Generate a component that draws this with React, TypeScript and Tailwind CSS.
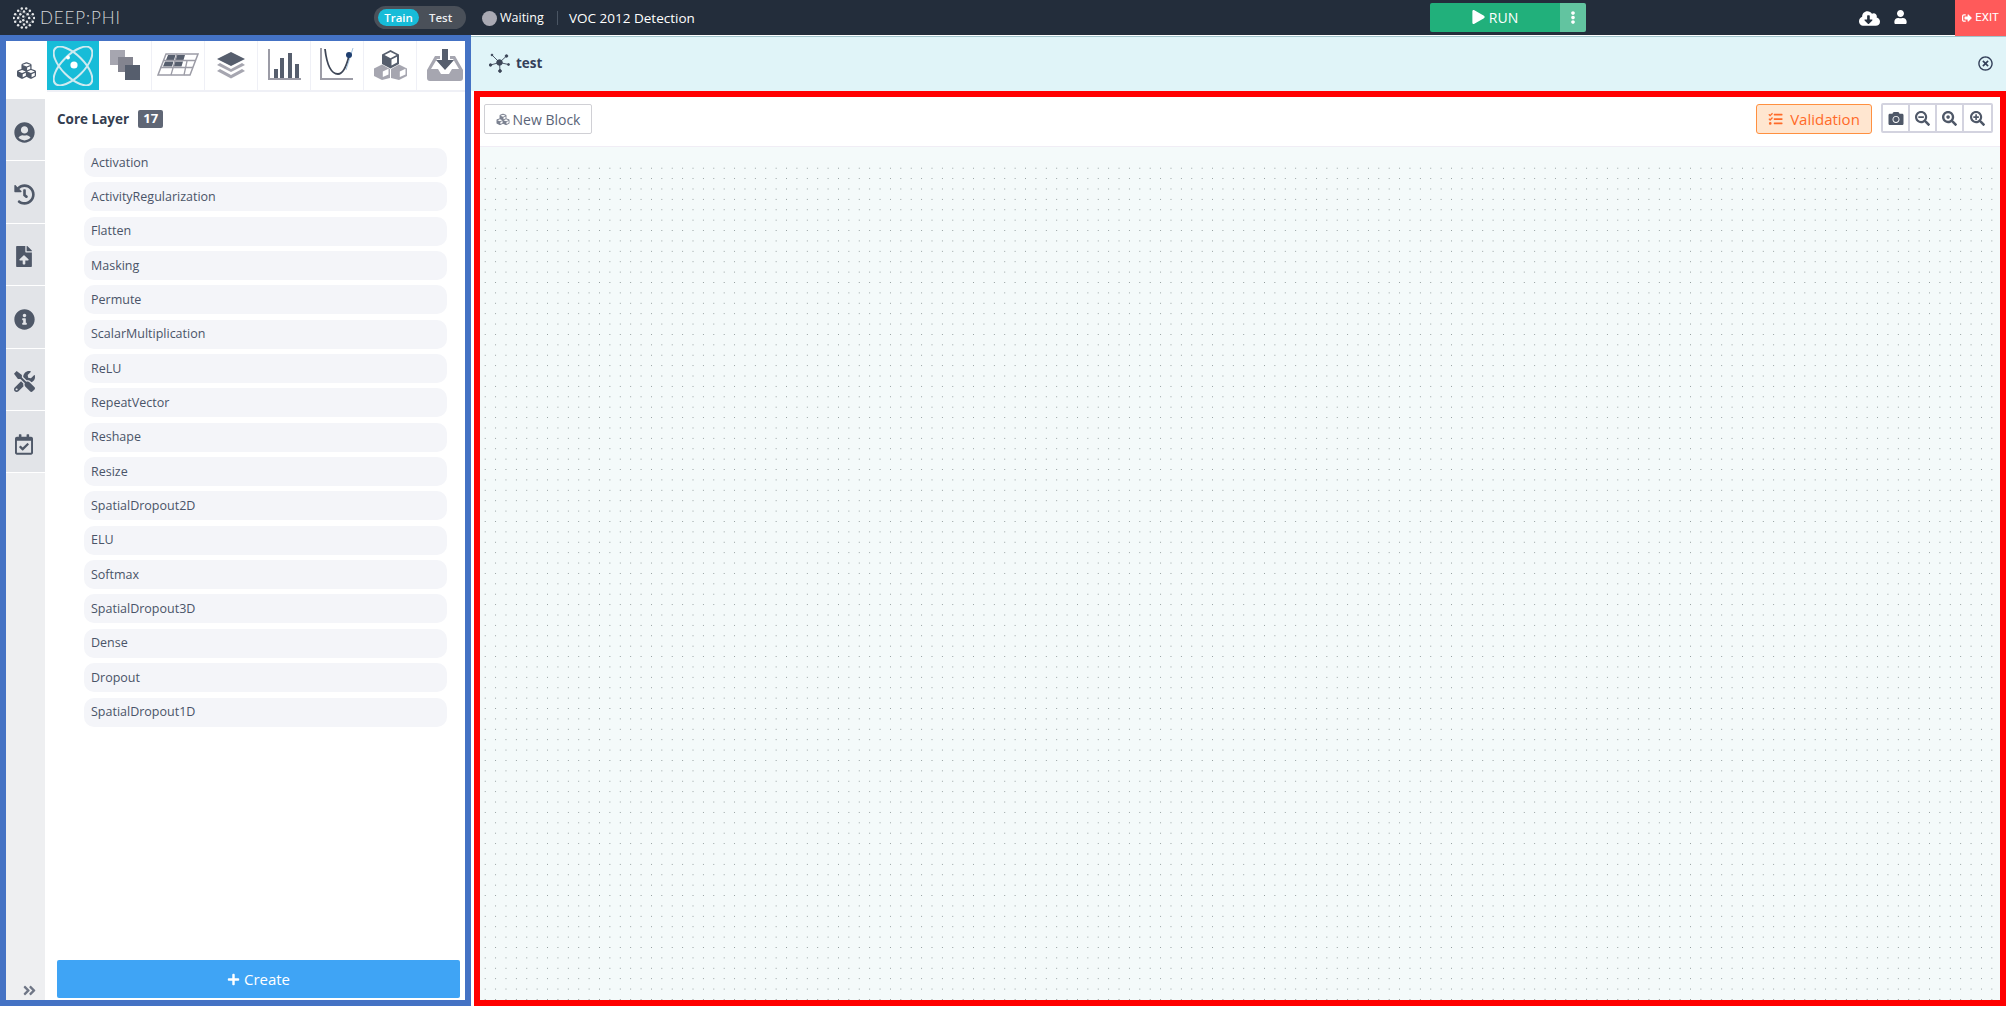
import type { ReactNode } from 'react'
import {
  FaAngleDoubleRight,
  FaCamera,
  FaCloudDownloadAlt,
  FaCubes,
  FaEllipsisV,
  FaFileUpload,
  FaHistory,
  FaInfoCircle,
  FaPlay,
  FaPlus,
  FaRegCalendarCheck,
  FaRegTimesCircle,
  FaSearchMinus,
  FaSearchPlus,
  FaSignOutAlt,
  FaTasks,
  FaTools,
  FaUser,
  FaUserCircle,
} from 'react-icons/fa'

const layers = [
  'Activation',
  'ActivityRegularization',
  'Flatten',
  'Masking',
  'Permute',
  'ScalarMultiplication',
  'ReLU',
  'RepeatVector',
  'Reshape',
  'Resize',
  'SpatialDropout2D',
  'ELU',
  'Softmax',
  'SpatialDropout3D',
  'Dense',
  'Dropout',
  'SpatialDropout1D',
]

const logoDots = [
  [12, 2], [18, 2], [7, 5], [15, 6], [23, 5], [3, 10], [10, 10], [20, 10], [27, 10],
  [1, 15], [7, 15], [14, 13], [14, 18], [22, 15], [29, 15], [3, 20], [10, 20], [19, 20],
  [27, 20], [7, 25], [15, 24], [23, 25], [12, 28], [18, 28],
]

function Logo() {
  return (
    <div className="flex items-center gap-[5px] ml-[13px] w-[120px]">
      <svg width="22" height="22" viewBox="0 0 30 30" className="shrink-0">
        <g stroke="#c9ccd0" strokeWidth="0.6" opacity="0.6">
          <path d="M12 2L7 15L15 24L27 20L20 10L7 5M3 10L14 18L23 5M3 20L15 6L29 15L18 28" fill="none" />
        </g>
        {logoDots.map(([x, y], i) => (
          <circle key={i} cx={x} cy={y} r="1.7" fill="#e4e6e8" />
        ))}
      </svg>
      <span className="font-['Lato',sans-serif] font-light text-[17px] leading-none tracking-[0.9px] text-[#d4d6d9] whitespace-nowrap">
        DEEP:PHI
      </span>
    </div>
  )
}

function TopBar() {
  return (
    <div className="h-[35px] bg-[#232d3b] flex items-center shrink-0 text-white">
      <Logo />
      <div className="ml-[241px] w-[92px] h-[23px] rounded-full bg-[#4a5059] flex items-center pl-[4px] text-[11.5px] font-semibold">
        <div className="w-[41px] h-[17px] rounded-full bg-[#17bcd8] flex items-center justify-center">Train</div>
        <div className="ml-[10px] text-[#eceef0]">Test</div>
      </div>
      <div className="ml-[16px] mt-[1px] w-[15px] h-[15px] rounded-full bg-[#a9a9b3]" />
      <span className="ml-[3px] mt-[1px] w-[44px] text-[12.5px] whitespace-nowrap">Waiting</span>
      <div className="ml-[13px] mt-[1px] w-px h-[14px] bg-[#4a5563]" />
      <span className="ml-[11px] mt-[1px] w-[126px] text-[13.5px] whitespace-nowrap">VOC 2012 Detection</span>
      <div className="ml-[735px] w-[156px] h-[29px] mt-[-1px] flex rounded-[2px] overflow-hidden">
        <div className="w-[130px] bg-[#21b07b] flex items-center justify-center gap-[4px] text-[14px]">
          <FaPlay className="w-[13px] h-[14px]" />
          <span>RUN</span>
        </div>
        <div className="flex-1 bg-[#62c4a0] flex items-center justify-center">
          <FaEllipsisV className="w-[12px] h-[13px]" />
        </div>
      </div>
      <FaCloudDownloadAlt className="ml-[273px] w-[21px] h-[17px] mt-[2px]" />
      <FaUser className="ml-[14px] w-[13px] h-[14px] mt-[-1px]" />
      <div className="ml-auto w-[51px] h-[36px] self-start bg-[#ff5a5a] flex items-center justify-center gap-[3px] text-[11.5px] font-['Roboto',sans-serif] relative z-10">
        <FaSignOutAlt className="w-[10px] h-[10px]" />
        <span>EXIT</span>
      </div>
    </div>
  )
}

function AtomIcon() {
  return (
    <svg width="40" height="40" viewBox="0 0 40 40" fill="none" stroke="#cfeaf0" strokeWidth="2">
      <ellipse cx="20" cy="20" rx="25" ry="11" transform="rotate(45 20 20)" />
      <ellipse cx="20" cy="20" rx="25" ry="11" transform="rotate(-45 20 20)" />
      <circle cx="21" cy="19" r="3.600" fill="#ffffff" stroke="none" />
      <circle cx="15" cy="11.500" r="1.900" fill="#ffffff" stroke="none" />
    </svg>
  )
}

function SquaresIcon() {
  return (
    <svg width="30" height="30" viewBox="0 0 30 30">
      <rect x="0" y="0" width="15" height="15" fill="#a6a6b0" />
      <rect x="8" y="7" width="15" height="15" fill="#83848f" />
      <rect x="15" y="15" width="15" height="15" fill="#565e6d" />
    </svg>
  )
}

function GridIcon() {
  return (
    <svg width="42" height="24" viewBox="0 0 42 24">
      <path d="M9 1H41L33 22H1Z" fill="none" stroke="#9c9ca6" strokeWidth="1.5" />
      <path d="M11 2H18.5L17 7H9ZM20 2H28L26.5 7H18.5ZM8 8.5H16.5L15 13.5H6ZM18 8.5H26L24.5 13.5H16.5Z" fill="#565e6d" />
      <path d="M30 8L27 22M39 7.500H6M36 14.500H3M20 1L14 22" stroke="#9c9ca6" strokeWidth="1.3" fill="none" />
    </svg>
  )
}

function StackIcon() {
  return (
    <svg width="28" height="28" viewBox="0 0 28 28">
      <path d="M14 1L28 8L14 15L0 8Z" fill="#565e6d" />
      <path d="M3 12L14 18L25 12L28 14L14 21L0 14Z" fill="#a6a6b0" />
      <path d="M3 18L14 24L25 18L28 20L14 27.500L0 20Z" fill="#a6a6b0" />
    </svg>
  )
}

function BarsIcon() {
  return (
    <svg width="33" height="32" viewBox="0 0 33 32">
      <path d="M1 0V30H33" fill="none" stroke="#9c9ca6" strokeWidth="2" />
      <rect x="6" y="20" width="4" height="9" fill="#565e6d" />
      <rect x="12" y="9" width="4" height="20" fill="#565e6d" />
      <rect x="20" y="4" width="4" height="25" fill="#565e6d" />
      <rect x="27" y="15" width="4" height="14" fill="#565e6d" />
    </svg>
  )
}

function CurveIcon() {
  return (
    <svg width="34" height="33" viewBox="0 0 34 33" fill="none">
      <path d="M1 0V31H33" stroke="#9c9ca6" strokeWidth="2" />
      <path d="M5 1C7 18 12 26 18 26C24 26 27 16 29 8" stroke="#3e4656" strokeWidth="1.8" />
      <path d="M33 0L26 22" stroke="#8fb6d8" strokeWidth="0.8" />
      <circle cx="29" cy="7" r="3" fill="#1f3f70" />
    </svg>
  )
}

function CubesIcon() {
  return (
    <svg width="33" height="30" viewBox="0 0 33 30">
      <path d="M16.500 0L25 4.500V14L16.500 18.500L8 14V4.500Z" fill="#565e6d" />
      <path d="M10.500 5L16.500 8.200L22.500 5L16.500 2Z M17.500 9.500V15.500L23 12.500V6.800Z" fill="#ffffff" />
      <path d="M8 14.500L16 19V28L8 30L0 26V18.500Z" fill="#a6a6b0" />
      <path d="M25 14.500L33 18.500V26L25 30L17 28V19Z" fill="#a6a6b0" />
      <path d="M8.800 21.500V27L14.500 24.500V18.800ZM25.800 21.500V27L31.500 24.500V18.800Z" fill="#ffffff" />
    </svg>
  )
}

function InboxIcon() {
  return (
    <svg width="36" height="32" viewBox="0 0 36 32">
      <path d="M8 7H13V10H10L4 20H11L14 25H22L25 20H32L26 10H23V7H28L36 21V29Q36 32 33 32H3Q0 32 0 29V21Z" fill="#a6a6b0" />
      <path d="M15 0H21V11H27L18 21L9 11H15Z" fill="#565e6d" />
    </svg>
  )
}

function NetworkIcon() {
  return (
    <svg width="21" height="20" viewBox="0 0 21 20" fill="#3c4658" stroke="#3c4658" strokeWidth="0.9">
      <circle cx="10.500" cy="9.500" r="2.800" />
      <circle cx="3" cy="2" r="0.900" />
      <circle cx="17.500" cy="3" r="1.300" />
      <circle cx="1.500" cy="12" r="1.300" />
      <circle cx="19.500" cy="11.500" r="1" />
      <circle cx="11" cy="18" r="1.400" />
      <path d="M10.500 9.500L3 2M10.500 9.500L17.500 3M10.500 9.500L1.500 12M10.500 9.500L19.500 11.500M10.500 9.500L11 18" fill="none" />
    </svg>
  )
}

function ZoomDotIcon() {
  return (
    <svg width="15" height="15" viewBox="0 0 512 512" fill="#4f5868">
      <path d="M505 442.700L405.300 343c-4.500-4.500-10.600-7-17-7H372c27.600-35.300 44-79.700 44-128C416 93.100 322.900 0 208 0S0 93.100 0 208s93.100 208 208 208c48.300 0 92.700-16.400 128-44v16.300c0 6.400 2.500 12.500 7 17l99.700 99.700c9.400 9.400 24.600 9.400 33.900 0l28.300-28.300c9.400-9.400 9.400-24.600.1-34zM208 336c-70.700 0-128-57.200-128-128 0-70.700 57.200-128 128-128 70.700 0 128 57.200 128 128 0 70.700-57.200 128-128 128z" />
      <circle cx="208" cy="208" r="62" />
    </svg>
  )
}

const topTabs = [
  <SquaresIcon key="squares" />,
  <GridIcon key="grid" />,
  <StackIcon key="stack" />,
  <BarsIcon key="bars" />,
  <CurveIcon key="curve" />,
  <CubesIcon key="cubes" />,
]

const railIcons = [
  <FaUserCircle key="user" className="w-[21px] h-[21px]" />,
  <FaHistory key="history" className="w-[21px] h-[21px]" />,
  <FaFileUpload key="file" className="w-[16px] h-[21px]" />,
  <FaInfoCircle key="info" className="w-[21px] h-[21px]" />,
  <FaTools key="tools" className="w-[21px] h-[21px]" />,
  <FaRegCalendarCheck key="calendar" className="w-[18px] h-[21px]" />,
]

function Rail() {
  return (
    <div className="w-[39px] shrink-0 bg-[#eeeff1] flex flex-col text-[#4f5868] relative">
      <div className="h-[58px] w-[41px] bg-white flex items-center justify-center relative z-10">
        <FaCubes className="w-[21px] h-[19px] text-[#4f5868]" />
      </div>
      {railIcons.map((icon, i) => (
        <div key={i} className="h-[62.4px] pt-[5px] pr-[3px] bg-[#e2e4e8] border-b border-white flex items-center justify-center">
          {icon}
        </div>
      ))}
      <FaAngleDoubleRight className="absolute left-[16px] bottom-[2px] w-[15px] h-[15px] text-[#6f7686]" />
    </div>
  )
}

function LayerPanel() {
  return (
    <div className="flex-1 min-w-0 flex flex-col">
      <div className="h-[51px] flex ml-[2px] border-b-2 border-[#eff0f6] shrink-0">
        <div className="w-[52px] h-[49px] bg-[#17bcd8] overflow-hidden flex items-center justify-center">
          <AtomIcon />
        </div>
        {topTabs.map((icon, i) => (
          <div key={i} className="w-[53px] h-[49px] border-r border-[#eff0f6] pb-[2px] flex items-center justify-center">
            {icon}
          </div>
        ))}
        <div className="flex-1 h-[49px] pb-[2px] pl-[10px] flex items-center">
          <InboxIcon />
        </div>
      </div>
      <div className="flex items-center pl-[12px] h-[18px] mt-[18px]">
        <span className="text-[13.5px] font-bold text-[#343e50]">Core Layer</span>
        <span className="ml-[9px] w-[25px] h-[18px] rounded-[2px] bg-[#5f6675] text-white text-[13px] font-bold flex items-center justify-center">
          17
        </span>
      </div>
      <div className="mt-[20px] pl-[39px] pr-[18px]">
        {layers.map((name) => (
          <div
            key={name}
            className="h-[29px] mb-[5.35px] pt-[1px] rounded-[10px] bg-[#f4f5f9] pl-[7px] flex items-center text-[12.5px] text-[#4a5468]"
          >
            {name}
          </div>
        ))}
      </div>
      <div className="mt-auto mb-[2px] ml-[12px] mr-[5px] h-[38px] bg-[#3fa4f5] rounded-[2px] flex items-center justify-center gap-[4px] text-white text-[15px]">
        <FaPlus className="w-[13px] h-[13px]" />
        <span>Create</span>
      </div>
    </div>
  )
}

function ToolButton({ children, last }: { children: ReactNode; last?: boolean }) {
  return (
    <div className={`w-[27px] h-full flex items-center justify-center text-[#4f5868] ${last ? 'flex-1' : 'border-r-2 border-[#d3d3df]'}`}>
      {children}
    </div>
  )
}

function Toolbar() {
  return (
    <div className="h-[50px] shrink-0 bg-white border-b border-[#f0edf5] flex items-center pl-[4px] pr-[7px] pb-[5px]">
      <div className="w-[108px] h-[30px] border border-[#d0d0d5] rounded-[2px] flex items-center justify-center gap-[3px] text-[14px] text-[#5a6478]">
        <FaCubes className="w-[14px] h-[13px] text-[#7b8190]" />
        <span>New Block</span>
      </div>
      <div className="ml-auto w-[116px] h-[30px] bg-[#ffe6d0] border border-[#ff9040] rounded-[3px] flex items-center justify-center gap-[7px] text-[15px] font-medium text-[#ff6a28]">
        <FaTasks className="w-[15px] h-[14px]" />
        <span>Validation</span>
      </div>
      <div className="ml-[9px] w-[112px] h-[30px] mt-[-2px] border-2 border-[#d3d3df] rounded-[2px] flex">
        <ToolButton>
          <FaCamera className="w-[16px] h-[15px]" />
        </ToolButton>
        <ToolButton>
          <FaSearchMinus className="w-[15px] h-[15px]" />
        </ToolButton>
        <ToolButton>
          <ZoomDotIcon />
        </ToolButton>
        <ToolButton last>
          <FaSearchPlus className="w-[15px] h-[15px]" />
        </ToolButton>
      </div>
    </div>
  )
}

export default function App() {
  return (
    <div className="h-[1009px] w-[2006px] bg-white flex flex-col overflow-hidden font-['Open_Sans',sans-serif]">
      <TopBar />
      <div className="flex-1 min-h-0 flex relative">
        <div className="w-[471px] h-[971px] shrink-0 border-[6px] border-[#4472c4] flex relative">
          <Rail />
          <LayerPanel />
        </div>
        <div className="flex-1 min-w-0 h-[971px] flex flex-col">
          <div className="h-[55px] mt-[1px] pb-[2px] shrink-0 bg-[#e0f4f8] border-t border-[#9fc4cc] flex items-center pl-[18px] pr-[13px]">
            <NetworkIcon />
            <span className="ml-[6px] text-[13.5px] font-bold text-[#34405a]">test</span>
            <FaRegTimesCircle className="ml-auto w-[15px] h-[15px] text-[#34405a]" />
          </div>
          <div className="flex-1 min-h-0 ml-[3px] border-[6px] border-[#ff0000] flex flex-col bg-[#f4fafa]">
            <Toolbar />
            <div className="flex-1 mt-[16px] bg-[radial-gradient(circle,#8f9a9a_0.55px,transparent_0.8px)] bg-[size:10.4px_10.4px]" />
          </div>
        </div>
      </div>
    </div>
  )
}
